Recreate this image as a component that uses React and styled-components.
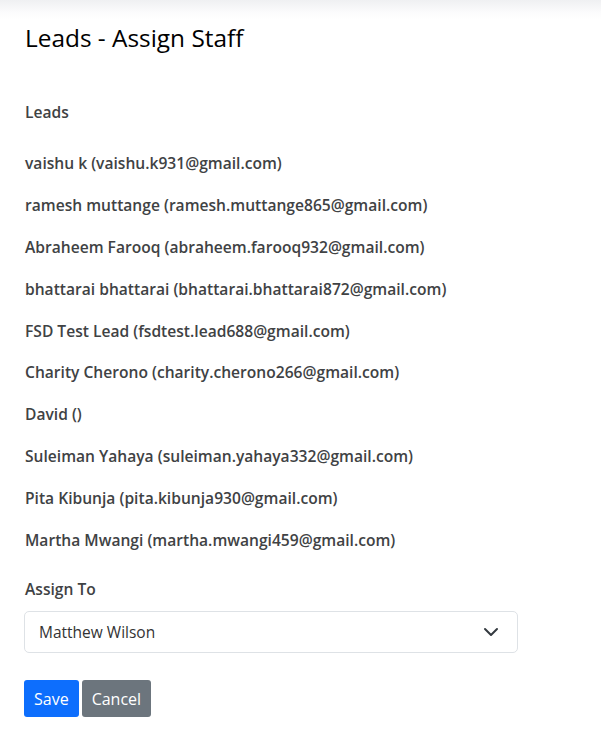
import React from "react";
import styled, { createGlobalStyle } from "styled-components";

const Global = createGlobalStyle`
  html, body { margin: 0; padding: 0; background: #fff; }
  body { font-family: "Open Sans", "Lato", sans-serif; color: #212529; }
  * { box-sizing: border-box; }
`;

const Page = styled.div`
  min-height: 744px;
  background: linear-gradient(to bottom, #eff0f2 0px, #fbfbfc 12px, #ffffff 20px);
  padding: 20px 24px 0 24px;
`;

const Title = styled.h1`
  margin: 0;
  padding-left: 1px;
  font-size: 24.4px;
  font-weight: 400;
  line-height: 36px;
  color: #000;
`;

const Section = styled.div`
  margin-top: ${(p) => p.$gap}px;
`;

const Label = styled.div`
  padding-left: 1px;
  font-size: 15.6px;
  font-weight: 600;
  color: #404244;
  line-height: 24px;
`;

const LeadList = styled.ul`
  list-style: none;
  margin: 27px 0 0;
  padding: 0 0 0 1px;
  display: flex;
  flex-direction: column;
  gap: 17.9px;
`;

const Lead = styled.li`
  font-size: 15.6px;
  font-weight: 600;
  color: #404244;
  line-height: 24px;
`;

const SelectBox = styled.div`
  margin-top: 10px;
  width: 494px;
  height: 42px;
  border: 1px solid #dee2e6;
  border-radius: 5px;
  display: flex;
  align-items: center;
  justify-content: space-between;
  padding: 0 18px 0 14px;
  font-size: 15.5px;
  color: #333;
`;

const Buttons = styled.div`
  margin-top: 27px;
  display: flex;
  gap: 3px;
`;

const Button = styled.button`
  font-family: inherit;
  font-size: 16px;
  border: none;
  border-radius: 3px;
  height: 37px;
  padding: 0 10px;
  color: #fff;
  background: ${(p) => (p.$variant === "secondary" ? "#6c757d" : "#0d6efd")};
`;

const leads = [
  "vaishu k (vaishu.k931@gmail.com)",
  "ramesh muttange (ramesh.muttange865@gmail.com)",
  "Abraheem Farooq (abraheem.farooq932@gmail.com)",
  "bhattarai bhattarai (bhattarai.bhattarai872@gmail.com)",
  "FSD Test Lead (fsdtest.lead688@gmail.com)",
  "Charity Cherono (charity.cherono266@gmail.com)",
  "David ()",
  "Suleiman Yahaya (suleiman.yahaya332@gmail.com)",
  "Pita Kibunja (pita.kibunja930@gmail.com)",
  "Martha Mwangi (martha.mwangi459@gmail.com)",
];

export default function App() {
  return (
    <Page>
      <Global />
      <Title>Leads - Assign Staff</Title>
      <Section $gap={44}>
        <Label>Leads</Label>
        <LeadList>
          {leads.map((l) => (
            <Lead key={l}>{l}</Lead>
          ))}
        </LeadList>
      </Section>
      <Section $gap={25}>
        <Label>Assign To</Label>
        <SelectBox>
          <span>Matthew Wilson</span>
          <svg width="16" height="16" viewBox="0 0 16 16">
            <path d="M2 5l6 6 6-6" fill="none" stroke="#343a40" strokeWidth="2" strokeLinecap="round" strokeLinejoin="round" />
          </svg>
        </SelectBox>
      </Section>
      <Buttons>
        <Button>Save</Button>
        <Button $variant="secondary">Cancel</Button>
      </Buttons>
    </Page>
  );
}
